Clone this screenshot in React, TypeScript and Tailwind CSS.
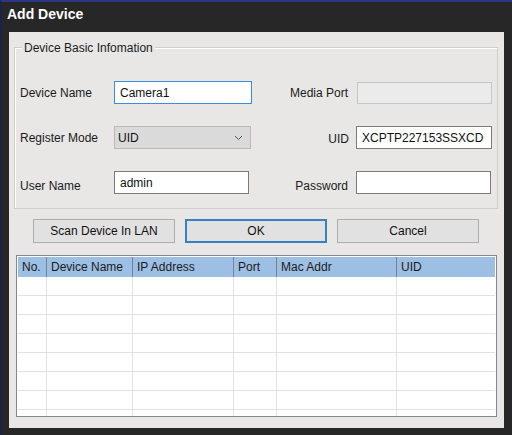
import React from 'react';

const COLS = [
  { label: 'No.', w: 'w-[29px]' },
  { label: 'Device Name', w: 'w-[86px]' },
  { label: 'IP Address', w: 'w-[101px]' },
  { label: 'Port', w: 'w-[43px]' },
  { label: 'Mac Addr', w: 'w-[120px]' },
  { label: 'UID', w: 'flex-1' },
];

const FONT = { fontFamily: '"Liberation Sans", Arial, sans-serif' };

function Label({ children, right, low }: { children: React.ReactNode; right?: boolean; low?: boolean }) {
  return (
    <span
      className={`text-[12px] text-[#1b1b1b] ${right ? 'text-right pr-[9px]' : ''} ${low ? 'translate-y-[3px]' : ''}`}
    >
      {children}
    </span>
  );
}

export default function App() {
  const rows = Array.from({ length: 8 });
  return (
    <div
      className="w-[512px] h-[435px] bg-[#272727] border-t-2 border-t-[#2b3786] border-l-2 border-l-[#1d2443] flex flex-col overflow-hidden"
      style={FONT}
    >
      <div className="h-[30px] flex items-center pl-[5px] pb-[6px] text-white font-bold text-[14px]">
        Add Device
      </div>

      <div className="ml-[7px] mr-[8px] mb-[7px] flex-1 bg-[#e8e7e5] flex flex-col px-[5px]">
        {/* group box */}
        <div className="relative mt-[15px] ml-0 mr-[1px] h-[162px] border border-[#cfcfcf] shadow-[inset_1px_1px_0_#fff] pt-[33px] pl-[5px]">
          <span className="absolute -top-[9px] left-[7px] px-[2px] bg-[#e8e7e5] text-[12px] text-[#1b1b1b]">
            Device Basic Infomation
          </span>
          <div className="grid grid-cols-[94px_138px_105px_135px] grid-rows-[23px_23px_23px] gap-y-[22px] items-center">
            <Label>Device Name</Label>
            <div className="h-[23px] border border-[#3b8be0] bg-white flex items-center pl-[5px] text-[12px] text-[#111]">
              Camera1
            </div>
            <Label right>Media Port</Label>
            <div className="h-[22px] border border-[#c6c6c6] bg-[#ebebeb]" />

            <Label>Register Mode</Label>
            <div className="h-[23px] w-[137px] border border-[#b9b9b9] bg-[#dadada] flex items-center pl-[3px] pr-[6px] text-[12px] text-[#111]">
              <span className="flex-1">UID</span>
              <svg width="9" height="6" viewBox="0 0 9 6" className="mr-[1px]">
                <path d="M1 1 L4.5 4.5 L8 1" fill="none" stroke="#555" strokeWidth="1" />
              </svg>
            </div>
            <div className="flex justify-end pr-[9px] -mr-[1px] translate-y-[1px]">
              <span className="text-[12px] text-[#1b1b1b]">UID</span>
            </div>
            <div className="h-[23px] -ml-[1px] border border-[#7a7a7a] bg-white flex items-center pl-[5px] text-[12px] text-[#111]">
              XCPTP227153SSXCD
            </div>

            <Label low>User Name</Label>
            <div className="h-[23px] w-[135px] border border-[#7a7a7a] bg-white flex items-center pl-[5px] text-[12px] text-[#111]">
              admin
            </div>
            <Label right low>Password</Label>
            <div className="h-[23px] w-[135px] -ml-[1px] border border-[#7a7a7a] bg-white" />
          </div>
        </div>

        {/* buttons */}
        <div className="mt-[10px] pl-[19px] flex gap-[10px]">
          <button className="w-[142px] h-[24px] border border-[#adadad] bg-[#e1e1e1] text-[12px] text-[#111]">
            Scan Device In LAN
          </button>
          <button className="w-[142px] h-[24px] border-2 border-[#3a7fc2] bg-[#e1e1e1] text-[12px] text-[#111]">
            OK
          </button>
          <button className="w-[142px] h-[24px] border border-[#adadad] bg-[#e1e1e1] text-[12px] text-[#111]">
            Cancel
          </button>
        </div>

        {/* device list */}
        <div className="mt-[12px] mx-[2px] h-[162px] border border-[#828790] bg-white overflow-hidden px-[1px] pt-[1px]">
          <div className="h-[20px] bg-[#9dbfe4] flex">
            {COLS.map((c, i) => (
              <div
                key={c.label}
                className={`${c.w} h-full flex items-center pl-[4px] text-[12px] text-[#1b1b1b] ${i < COLS.length - 1 ? 'border-r border-[#6f84a0]' : ''}`}
              >
                {c.label}
              </div>
            ))}
          </div>
          {rows.map((_, r) => (
            <div key={r} className="h-[19px] flex border-b border-[#e2e2e2]">
              {COLS.map((c, i) => (
                <div
                  key={c.label}
                  className={`${c.w} h-full ${i < COLS.length - 1 ? 'border-r border-[#e2e2e2]' : ''}`}
                />
              ))}
            </div>
          ))}
        </div>
      </div>
    </div>
  );
}
